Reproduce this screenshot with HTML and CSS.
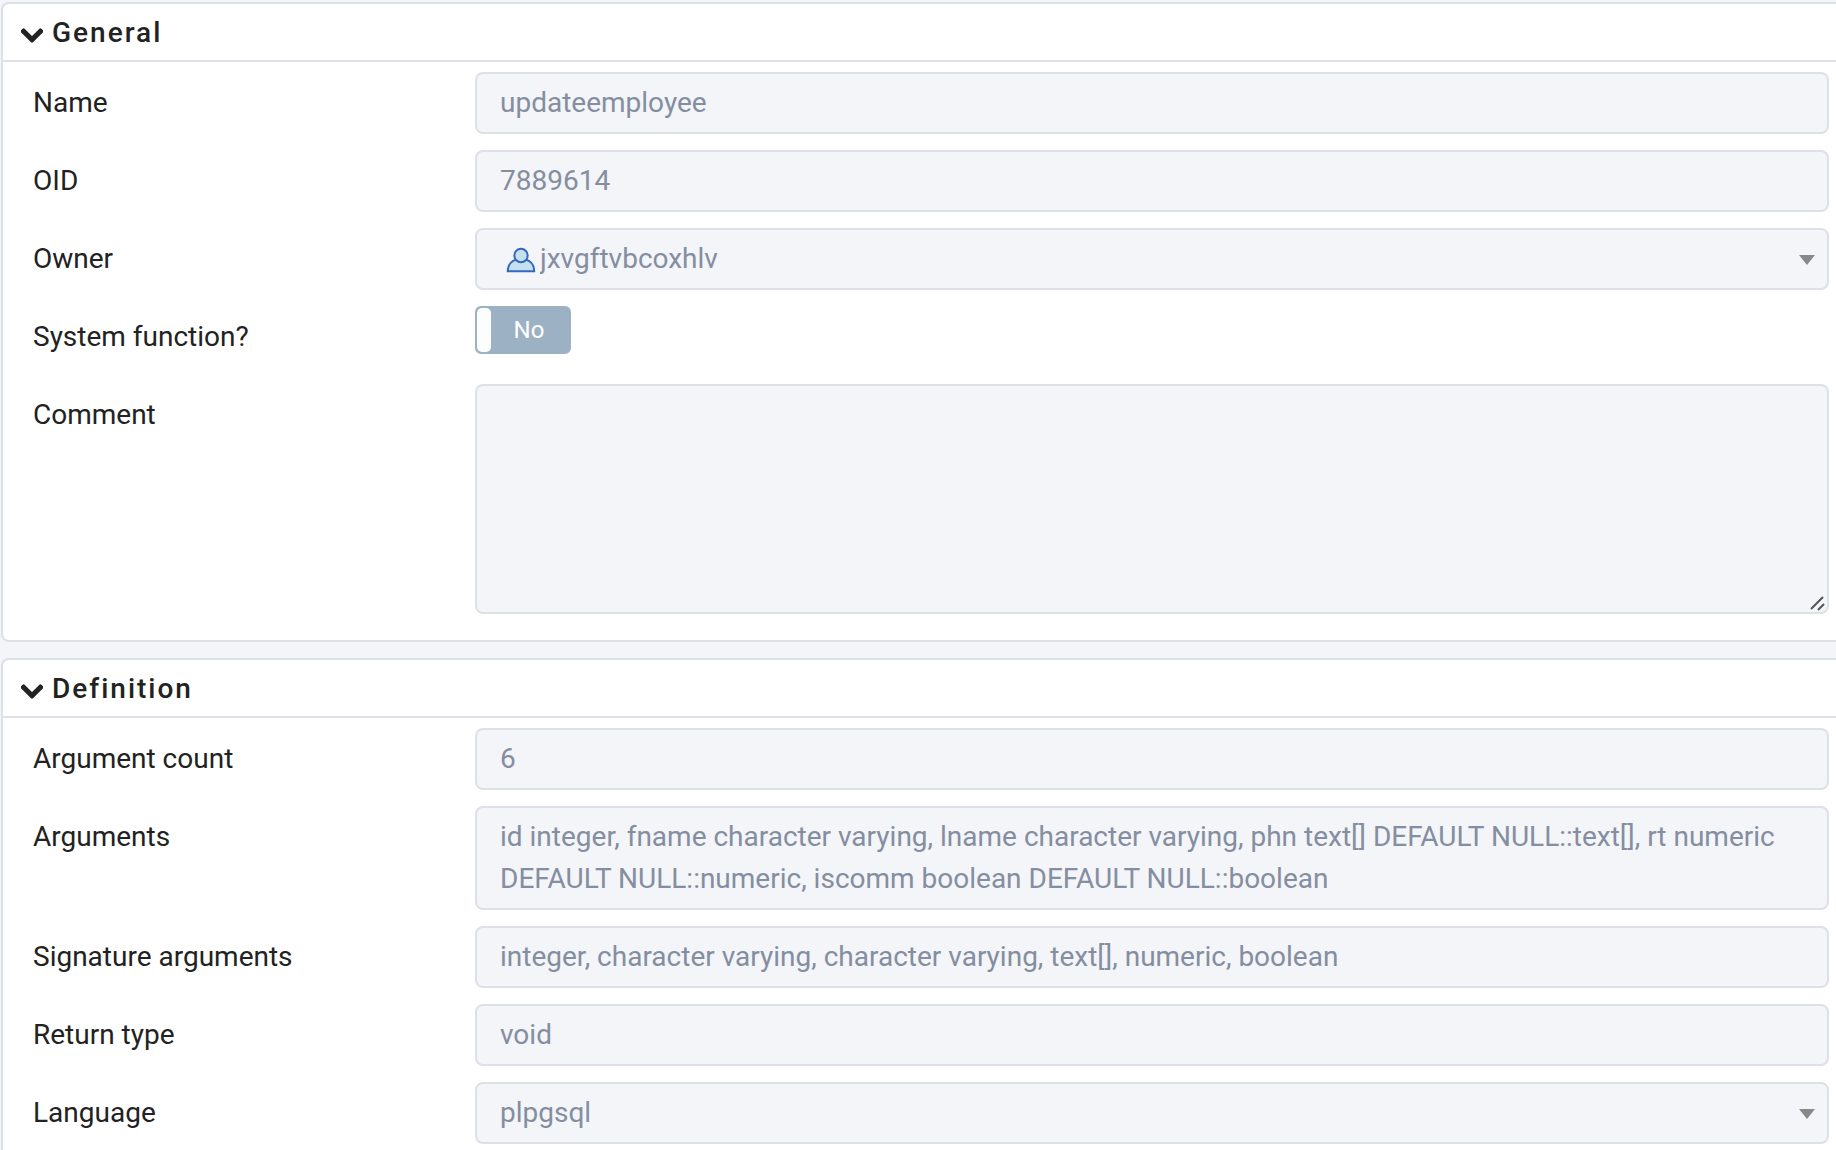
FILE: index.html
```html
<!DOCTYPE html>
<html lang="en">
<head>
  <meta charset="UTF-8">
  <title>updateemployee</title>
  <meta name="viewport" content="width=device-width, initial-scale=1.0">
  <link rel="stylesheet" href="styles.css">
</head>
<body>
  <form class="properties">
    <section class="panel">
      <h2 class="panel-header">
        <svg class="chevron" viewBox="0 0 448 512" aria-hidden="true"><path d="M207.029 381.476L12.686 187.132c-9.373-9.373-9.373-24.569 0-33.941l22.667-22.667c9.357-9.357 24.522-9.375 33.901-.04L224 284.505l154.745-154.021c9.379-9.335 24.544-9.317 33.901.04l22.667 22.667c9.373 9.373 9.373 24.569 0 33.941L240.971 381.476c-9.373 9.372-24.569 9.372-33.942 0z"/></svg>
        General
      </h2>
      <div class="panel-body">
        <div class="row">
          <label for="name">Name</label>
          <input class="field" type="text" id="name" value="updateemployee" disabled>
        </div>
        <div class="row">
          <label for="oid">OID</label>
          <input class="field" type="text" id="oid" value="7889614" disabled>
        </div>
        <div class="row">
          <label for="owner">Owner</label>
          <div class="control">
            <select class="field with-icon" id="owner" disabled>
              <option>jxvgftvbcoxhlv</option>
            </select>
            <svg class="role-icon" viewBox="0 0 30 26" aria-hidden="true">
              <path d="M1.8 24.2C1.8 17 6.500 12 15 12s13.200 5 13.200 12.200z"/>
              <circle cx="15" cy="8.500" r="6.700"/>
            </svg>
            <span class="arrow"></span>
          </div>
        </div>
        <div class="row">
          <label for="system">System function?</label>
          <div class="switch-cell">
            <label class="switch">
              <input type="checkbox" id="system" disabled>
              <span class="knob"></span>
              <span class="switch-text">No</span>
            </label>
          </div>
        </div>
        <div class="row">
          <label for="comment">Comment</label>
          <div class="control">
            <textarea class="field comment" id="comment" disabled></textarea>
            <svg class="grip" viewBox="0 0 16 16" aria-hidden="true"><path d="M2 14L14 2M9 15l6-6"/></svg>
          </div>
        </div>
      </div>
    </section>

    <section class="panel">
      <h2 class="panel-header">
        <svg class="chevron" viewBox="0 0 448 512" aria-hidden="true"><path d="M207.029 381.476L12.686 187.132c-9.373-9.373-9.373-24.569 0-33.941l22.667-22.667c9.357-9.357 24.522-9.375 33.901-.04L224 284.505l154.745-154.021c9.379-9.335 24.544-9.317 33.901.04l22.667 22.667c9.373 9.373 9.373 24.569 0 33.941L240.971 381.476c-9.373 9.372-24.569 9.372-33.942 0z"/></svg>
        Definition
      </h2>
      <div class="panel-body">
        <div class="row">
          <label for="argcount">Argument count</label>
          <input class="field" type="text" id="argcount" value="6" disabled>
        </div>
        <div class="row">
          <label for="args">Arguments</label>
          <textarea class="field" id="args" rows="2" disabled>id integer, fname character varying, lname character varying, phn text[] DEFAULT NULL::text[], rt numeric DEFAULT NULL::numeric, iscomm boolean DEFAULT NULL::boolean</textarea>
        </div>
        <div class="row">
          <label for="sigargs">Signature arguments</label>
          <input class="field" type="text" id="sigargs" value="integer, character varying, character varying, text[], numeric, boolean" disabled>
        </div>
        <div class="row">
          <label for="rettype">Return type</label>
          <input class="field" type="text" id="rettype" value="void" disabled>
        </div>
        <div class="row">
          <label for="language">Language</label>
          <div class="control">
            <select class="field" id="language" disabled>
              <option>plpgsql</option>
            </select>
            <span class="arrow"></span>
          </div>
        </div>
      </div>
    </section>
  </form>
</body>
</html>
```
FILE: styles.css
```css
* {
  box-sizing: border-box;
}

body {
  margin: 0;
  height: 100vh;
  overflow: hidden;
  background: #f3f5f9;
  color: #222;
  font-family: Roboto, sans-serif;
  font-size: 28px;
  line-height: 42px;
}

.properties {
  display: flex;
  flex-direction: column;
  gap: 16px;
  padding: 2px 0 16px 1px;
}

.panel {
  background: #fff;
  border: 2px solid #dde0e6;
  border-right: 0;
  border-radius: 8px 0 0 8px;
}

.panel-header {
  display: flex;
  align-items: center;
  gap: 9px;
  margin: 0;
  padding: 8px 18px 6px;
  border-bottom: 2px solid #dde0e6;
  font-size: 28px;
  font-weight: 500;
  letter-spacing: 2px;
}

.chevron {
  width: 22px;
  height: 25px;
  margin-top: 4px;
  fill: #222;
  stroke: #222;
  stroke-width: 24;
}

.panel-body {
  display: flex;
  flex-direction: column;
  gap: 16px;
  padding: 10px 7px 26px 30px;
}

.row {
  display: grid;
  grid-template-columns: 442px 1fr;
  align-items: start;
  min-height: 62px;
}

.row > label {
  padding-top: 10px;
}

.control {
  position: relative;
}

.field {
  display: block;
  width: 100%;
  margin: 0;
  padding: 8px 23px;
  border: 2px solid #dde0e6;
  border-radius: 8px;
  background: #f3f5f9;
  color: #848ea0;
  font: inherit;
  opacity: 1;
  appearance: none;
  resize: none;
  overflow: hidden;
}

input.field,
select.field {
  height: 62px;
}

input.field {
  padding-top: 7px;
  padding-bottom: 9px;
}

.with-icon {
  padding-left: 63px;
}

.role-icon {
  position: absolute;
  left: 31px;
  top: 19px;
  width: 30px;
  height: 26px;
  fill: #c5e0ef;
  stroke: #3567bd;
  stroke-width: 2;
}

.arrow {
  position: absolute;
  right: 14px;
  top: 27px;
  border: 8px solid transparent;
  border-top: 10px solid #888;
  border-bottom: 0;
  pointer-events: none;
}

.comment {
  height: 230px;
}

.grip {
  position: absolute;
  right: 4px;
  bottom: 3px;
  width: 16px;
  height: 16px;
  fill: none;
  stroke: #555;
  stroke-width: 2;
  pointer-events: none;
}

.switch {
  display: flex;
  width: 96px;
  height: 48px;
  border: 2px solid #9db1c5;
  border-radius: 6px;
  background: #9db1c5;
  color: #fff;
  font-size: 24px;
  line-height: 44px;
}

.switch input {
  appearance: none;
  width: 0;
  margin: 0;
}

.knob {
  width: 14px;
  border-radius: 5px;
  background: #fcfdfd;
}

.switch-text {
  flex: 1;
  padding-right: 2px;
  text-align: center;
}
```
